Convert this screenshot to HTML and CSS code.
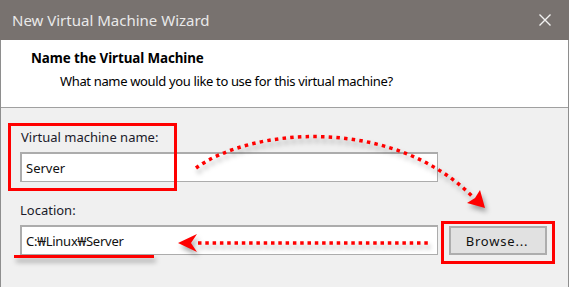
FILE: index.html
```html
<!DOCTYPE html>
<html lang="en">
<head>
<meta charset="utf-8">
<title>New Virtual Machine Wizard</title>
<link rel="stylesheet" href="styles.css">
</head>
<body>
<div class="window">
  <div class="titlebar">
    <span class="title">New Virtual Machine Wizard</span>
    <svg class="close" width="12" height="12" viewBox="0 0 12 12"><path d="M0.5 0.5 L11.5 11.5 M11.5 0.5 L0.5 11.5" stroke="#f2f2f2" stroke-width="1.4" fill="none"/></svg>
  </div>
  <div class="header">
    <div class="heading">Name the Virtual Machine</div>
    <div class="subheading">What name would you like to use for this virtual machine?</div>
  </div>
  <div class="content">
    <div class="label">Virtual machine name:</div>
    <div class="row">
      <div class="input">Server</div>
    </div>
    <div class="label label-loc">Location:</div>
    <div class="row loc-row">
      <div class="input input-path">C:₩Linux₩Server</div>
      <div class="button">Browse...</div>
    </div>
  </div>
  <div class="mark mark-name"></div>
  <div class="mark mark-browse"></div>
  <svg class="annot" width="569" height="287" viewBox="0 0 569 287">
    <g class="shadowed">
      <path d="M195 168 C250 128 390 115 472 197" fill="none" stroke="#ff0000" stroke-width="3.5" stroke-dasharray="3.5 4.2"/>
      <polygon points="484,208 466,203 474,198 479,190" fill="#ff0000"/>
      <path d="M197 243 H428" fill="none" stroke="#ff0000" stroke-width="3.5" stroke-dasharray="3.5 3.8"/>
      <polygon points="177,243 196,234 190,243 196,252" fill="#ff0000"/>
      <path d="M13 256.5 H153" stroke="#ff0000" stroke-width="3"/>
    </g>
  </svg>
</div>
</body>
</html>
```
FILE: styles.css
```css
html, body {
  margin: 0;
  padding: 0;
}
body {
  width: 569px;
  height: 287px;
  overflow: hidden;
  background: #f0f0f0;
  font-family: "Noto Sans", "Liberation Sans", sans-serif;
  color: #000;
}
.window {
  position: relative;
  width: 569px;
  height: 287px;
  display: flex;
  flex-direction: column;
  box-sizing: border-box;
  border-left: 1px solid #8e8e8e;
  border-right: 1px solid #8e8e8e;
}
.titlebar {
  height: 40px;
  flex: none;
  background: #78726f;
  margin: 0 -1px;
  display: flex;
  align-items: center;
  justify-content: space-between;
  padding: 0 18px 0 12px;
}
.title {
  color: #e9e9e9;
  font-size: 15px;
}
.close {
  display: block;
}
.header {
  flex: none;
  height: 68px;
  box-sizing: border-box;
  background: #fff;
  border-bottom: 1px solid #a0a0a0;
  padding: 10px 0 0 30px;
}
.heading {
  font-weight: bold;
  font-size: 13.4px;
  line-height: 17px;
  letter-spacing: -0.1px;
}
.subheading {
  font-size: 13px;
  line-height: 16px;
  margin-top: 6px;
  padding-left: 29px;
  letter-spacing: -0.35px;
}
.content {
  padding: 21px 0 0 19px;
  font-size: 13px;
}
.label {
  line-height: 16px;
  color: #1a1a2a;
  padding-left: 1px;
}
.label-loc {
  margin-top: 20px;
  padding-left: 0;
}
.row {
  display: flex;
  margin-top: 7px;
}
.input {
  width: 418px;
  height: 30px;
  box-sizing: border-box;
  background: #fff;
  border: 2px solid #acacac;
  border-width: 2px 1px 1px 2px;
  padding-left: 4px;
  display: flex;
  align-items: center;
  color: #111;
}
.input-path {
  letter-spacing: -0.25px;
}
.loc-row {
  gap: 11px;
  align-items: flex-start;
}
.button {
  margin-top: 1px;
  width: 98px;
  height: 29px;
  box-sizing: border-box;
  background: #e1e1e1;
  border: 2px solid #adadad;
  display: flex;
  align-items: center;
  justify-content: center;
  padding-right: 2px;
  letter-spacing: 0.8px;
  color: #111;
}
.mark {
  position: absolute;
  border: 3px solid #ff0000;
  box-sizing: border-box;
}
.mark-name {
  left: 7px;
  top: 123px;
  width: 169px;
  height: 68px;
}
.mark-browse {
  left: 440px;
  top: 221px;
  width: 114px;
  height: 43px;
}
.annot {
  position: absolute;
  left: 0;
  top: 0;
  pointer-events: none;
}
.shadowed {
  filter: drop-shadow(2px 4px 2.5px rgba(0, 0, 0, 0.35));
}
```
